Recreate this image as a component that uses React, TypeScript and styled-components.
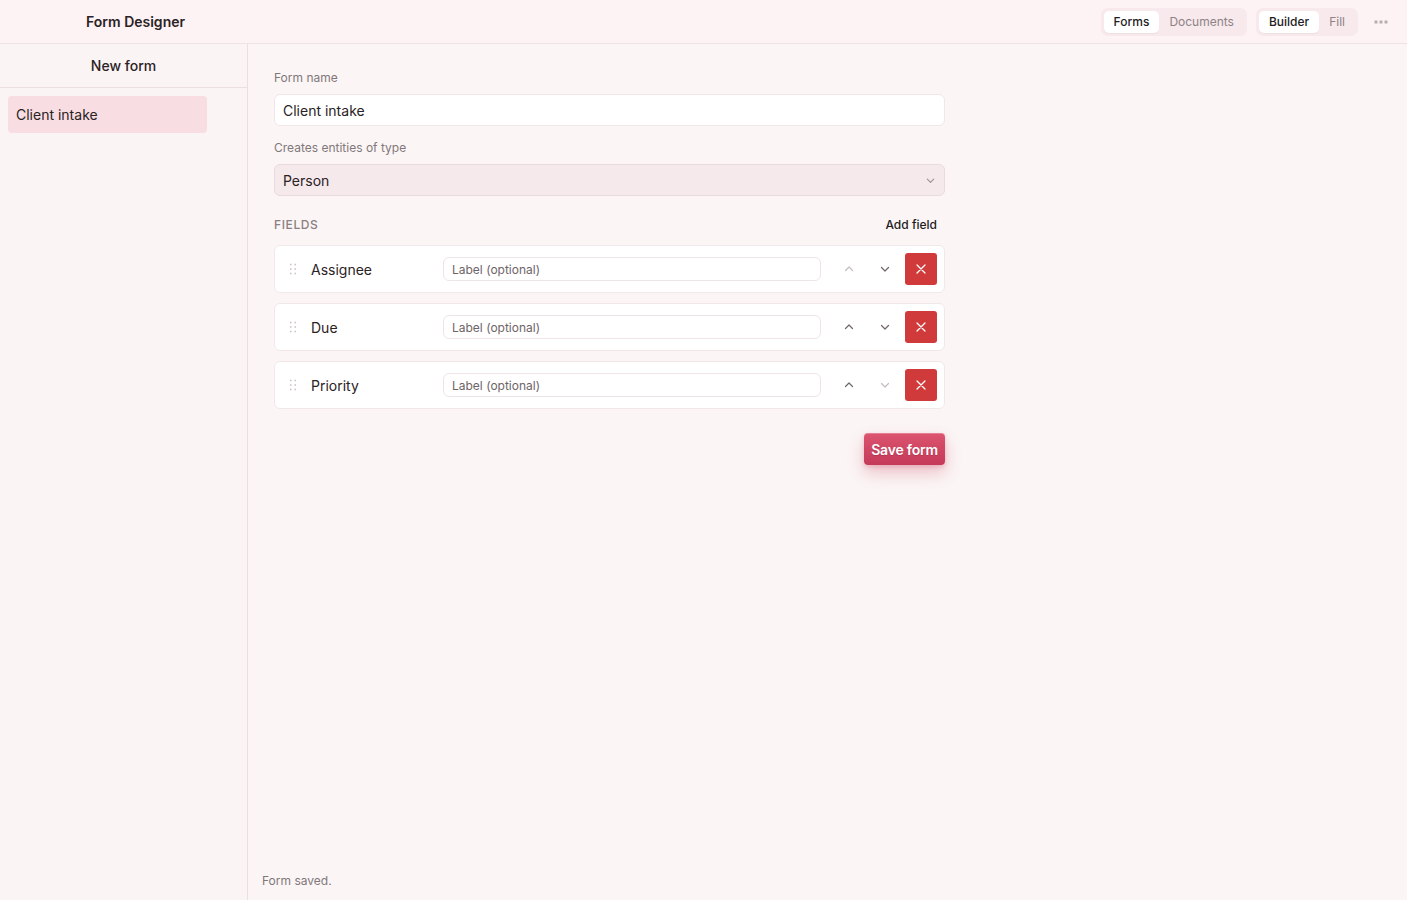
import React from "react";
import styled, { createGlobalStyle } from "styled-components";

const Global = createGlobalStyle`
  html, body { margin: 0; padding: 0; height: 100%; }
  body { font-family: Inter, "Noto Sans", sans-serif; color: #2a2224; background: #fbf5f5; }
  #root { height: 100vh; }
  * { box-sizing: border-box; }
`;

const Page = styled.div`
  display: flex;
  flex-direction: column;
  height: 100vh;
`;

const Header = styled.header`
  height: 44px;
  flex: none;
  display: flex;
  align-items: center;
  padding: 0 15px 0 86px;
  background: #fdf2f4;
  border-bottom: 1px solid #efe2e4;
`;

const Title = styled.div`
  font-size: 14px;
  font-weight: 600;
  color: #2a2224;
  flex: 1;
`;

const Segmented = styled.div`
  display: flex;
  padding: 3px;
  border-radius: 7px;
  background: #f8e9ec;
  margin-left: 9px;
`;

const Seg = styled.button<{ $active?: boolean }>`
  border: none;
  font-family: inherit;
  font-size: 12px;
  font-weight: ${(p) => (p.$active ? 500 : 400)};
  padding: 0 10px;
  height: 22px;
  border-radius: 5px;
  background: ${(p) => (p.$active ? "#ffffff" : "transparent")};
  color: ${(p) => (p.$active ? "#231b1d" : "#8d8386")};
  box-shadow: ${(p) => (p.$active ? "0 1px 1px rgba(0,0,0,0.04)" : "none")};
`;

const More = styled.div`
  width: 22px;
  margin-left: 12px;
  display: flex;
  justify-content: center;
  color: #b8aeb1;
`;

const Body = styled.div`
  flex: 1;
  display: flex;
  min-height: 0;
`;

const Sidebar = styled.aside`
  width: 248px;
  flex: none;
  background: #fbf4f4;
  border-right: 1px solid #eddfe1;
  display: flex;
  flex-direction: column;
`;

const NewForm = styled.div`
  height: 44px;
  display: flex;
  align-items: center;
  justify-content: center;
  font-size: 14px;
  font-weight: 500;
  color: #2a2224;
  border-bottom: 1px solid #eddfe1;
`;

const List = styled.div`
  padding: 8px;
`;

const ListItem = styled.div<{ $active?: boolean }>`
  width: 199px;
  height: 37px;
  display: flex;
  align-items: center;
  padding: 0 8px;
  border-radius: 4px;
  font-size: 14px;
  background: ${(p) => (p.$active ? "#f8dde2" : "transparent")};
  color: #2a2224;
`;

const Main = styled.main`
  flex: 1;
  display: flex;
  flex-direction: column;
  background: #fbf5f5;
`;

const Content = styled.div`
  flex: 1;
  padding: 26px 26px 0 26px;
  width: 723px;
`;

const FieldLabel = styled.div`
  font-size: 12px;
  color: #82787b;
  margin-bottom: 9px;
`;

const TextInput = styled.div`
  height: 32px;
  background: #fff;
  border: 1px solid #f1e6e8;
  border-radius: 6px;
  display: flex;
  align-items: center;
  padding: 0 8px;
  font-size: 14px;
  color: #2a2224;
  margin-bottom: 14px;
`;

const Select = styled(TextInput)`
  background: #f6e9ec;
  border-color: #ead9dd;
  justify-content: space-between;
  padding-right: 8px;
  margin-bottom: 0;
`;

const FieldsHead = styled.div`
  display: flex;
  justify-content: space-between;
  align-items: center;
  margin-top: 20px;
  height: 16px;
  padding-right: 8px;
`;

const Section = styled.div`
  font-size: 12px;
  font-weight: 500;
  letter-spacing: 0.6px;
  color: #8a7f82;
`;

const AddField = styled.div`
  font-size: 12px;
  font-weight: 500;
  color: #231b1d;
`;

const Rows = styled.div`
  display: flex;
  flex-direction: column;
  gap: 10px;
  margin-top: 13px;
`;

const Row = styled.div`
  height: 48px;
  background: #fff;
  border: 1px solid #f2e8ea;
  border-radius: 6px;
  display: flex;
  align-items: center;
  padding: 0 7px 0 12px;
`;

const Grip = styled.div`
  width: 12px;
  display: flex;
  justify-content: center;
  color: #c9c0c2;
`;

const Name = styled.div`
  width: 132px;
  margin-left: 12px;
  font-size: 14px;
  color: #2a2224;
`;

const LabelInput = styled.div`
  width: 378px;
  height: 24px;
  border: 1px solid #efe4e6;
  border-radius: 6px;
  display: flex;
  align-items: center;
  padding: 0 8px;
  font-size: 12px;
  color: #6e6467;
`;

const IconBtn = styled.div<{ $dim?: boolean }>`
  width: 32px;
  height: 32px;
  display: flex;
  align-items: center;
  justify-content: center;
  color: ${(p) => (p.$dim ? "#c6bdc0" : "#6f6568")};
`;

const Controls = styled.div`
  margin-left: auto;
  display: flex;
  align-items: center;
  gap: 4px;
`;

const Delete = styled.div`
  width: 32px;
  height: 32px;
  border-radius: 3px;
  background: #d13a3a;
  display: flex;
  align-items: center;
  justify-content: center;
  color: #fff;
`;

const Actions = styled.div`
  display: flex;
  justify-content: flex-end;
  margin-top: 24px;
`;

const SaveBtn = styled.button`
  height: 32px;
  padding: 0 7px;
  border: none;
  border-radius: 4px;
  font-family: inherit;
  font-size: 14px;
  font-weight: 600;
  letter-spacing: -0.2px;
  color: #fff;
  background: linear-gradient(180deg, #dc5470 0%, #c43a58 100%);
  box-shadow: 0 8px 16px rgba(200, 60, 90, 0.28), 0 2px 4px rgba(200, 60, 90, 0.2),
    inset 0 1px 0 rgba(255, 255, 255, 0.25);
  text-shadow: 0 1px 1px rgba(120, 20, 40, 0.3);
`;

const Status = styled.div`
  height: 40px;
  padding: 0 14px;
  display: flex;
  align-items: center;
  font-size: 12px;
  color: #82787b;
`;

const ChevUp = () => (
  <svg width="12" height="12" viewBox="0 0 12 12" fill="none" stroke="currentColor" strokeWidth="1.2" strokeLinecap="round" strokeLinejoin="round">
    <path d="M2.5 7.5 6 4l3.5 3.5" />
  </svg>
);
const ChevDown = ({ size = 12 }: { size?: number }) => (
  <svg width={size} height={size} viewBox="0 0 12 12" fill="none" stroke="currentColor" strokeWidth="1.2" strokeLinecap="round" strokeLinejoin="round">
    <path d="M2.5 4.5 6 8l3.5-3.5" />
  </svg>
);
const Cross = () => (
  <svg width="12" height="12" viewBox="0 0 12 12" fill="none" stroke="currentColor" strokeWidth="1.3" strokeLinecap="round">
    <path d="M2 2l8 8M10 2 2 10" />
  </svg>
);
const GripIcon = () => (
  <svg width="8" height="12" viewBox="0 0 8 12" fill="currentColor">
    {[1.5, 6, 10.5].map((y) => (
      <React.Fragment key={y}>
        <rect x="1" y={y - 0.75} width="1.5" height="1.5" />
        <rect x="5.5" y={y - 0.75} width="1.5" height="1.5" />
      </React.Fragment>
    ))}
  </svg>
);
const Dots = () => (
  <svg width="14" height="4" viewBox="0 0 14 4" fill="currentColor">
    <rect x="0.5" y="0.5" width="3" height="3" rx="0.5" />
    <rect x="5.5" y="0.5" width="3" height="3" rx="0.5" />
    <rect x="10.5" y="0.5" width="3" height="3" rx="0.5" />
  </svg>
);

const fields = [
  { name: "Assignee", upDim: true, downDim: false },
  { name: "Due", upDim: false, downDim: false },
  { name: "Priority", upDim: false, downDim: true },
];

export default function App() {
  return (
    <>
      <Global />
      <Page>
        <Header>
          <Title>Form Designer</Title>
          <Segmented>
            <Seg $active>Forms</Seg>
            <Seg>Documents</Seg>
          </Segmented>
          <Segmented>
            <Seg $active>Builder</Seg>
            <Seg>Fill</Seg>
          </Segmented>
          <More>
            <Dots />
          </More>
        </Header>
        <Body>
          <Sidebar>
            <NewForm>New form</NewForm>
            <List>
              <ListItem $active>Client intake</ListItem>
            </List>
          </Sidebar>
          <Main>
            <Content>
              <FieldLabel>Form name</FieldLabel>
              <TextInput>Client intake</TextInput>
              <FieldLabel>Creates entities of type</FieldLabel>
              <Select>
                <span>Person</span>
                <span style={{ color: "#9a8f92", display: "flex" }}>
                  <ChevDown size={11} />
                </span>
              </Select>
              <FieldsHead>
                <Section>FIELDS</Section>
                <AddField>Add field</AddField>
              </FieldsHead>
              <Rows>
                {fields.map((f) => (
                  <Row key={f.name}>
                    <Grip>
                      <GripIcon />
                    </Grip>
                    <Name>{f.name}</Name>
                    <LabelInput>Label (optional)</LabelInput>
                    <Controls>
                      <IconBtn $dim={f.upDim}>
                        <ChevUp />
                      </IconBtn>
                      <IconBtn $dim={f.downDim}>
                        <ChevDown />
                      </IconBtn>
                      <Delete>
                        <Cross />
                      </Delete>
                    </Controls>
                  </Row>
                ))}
              </Rows>
              <Actions>
                <SaveBtn>Save form</SaveBtn>
              </Actions>
            </Content>
            <Status>Form saved.</Status>
          </Main>
        </Body>
      </Page>
    </>
  );
}
